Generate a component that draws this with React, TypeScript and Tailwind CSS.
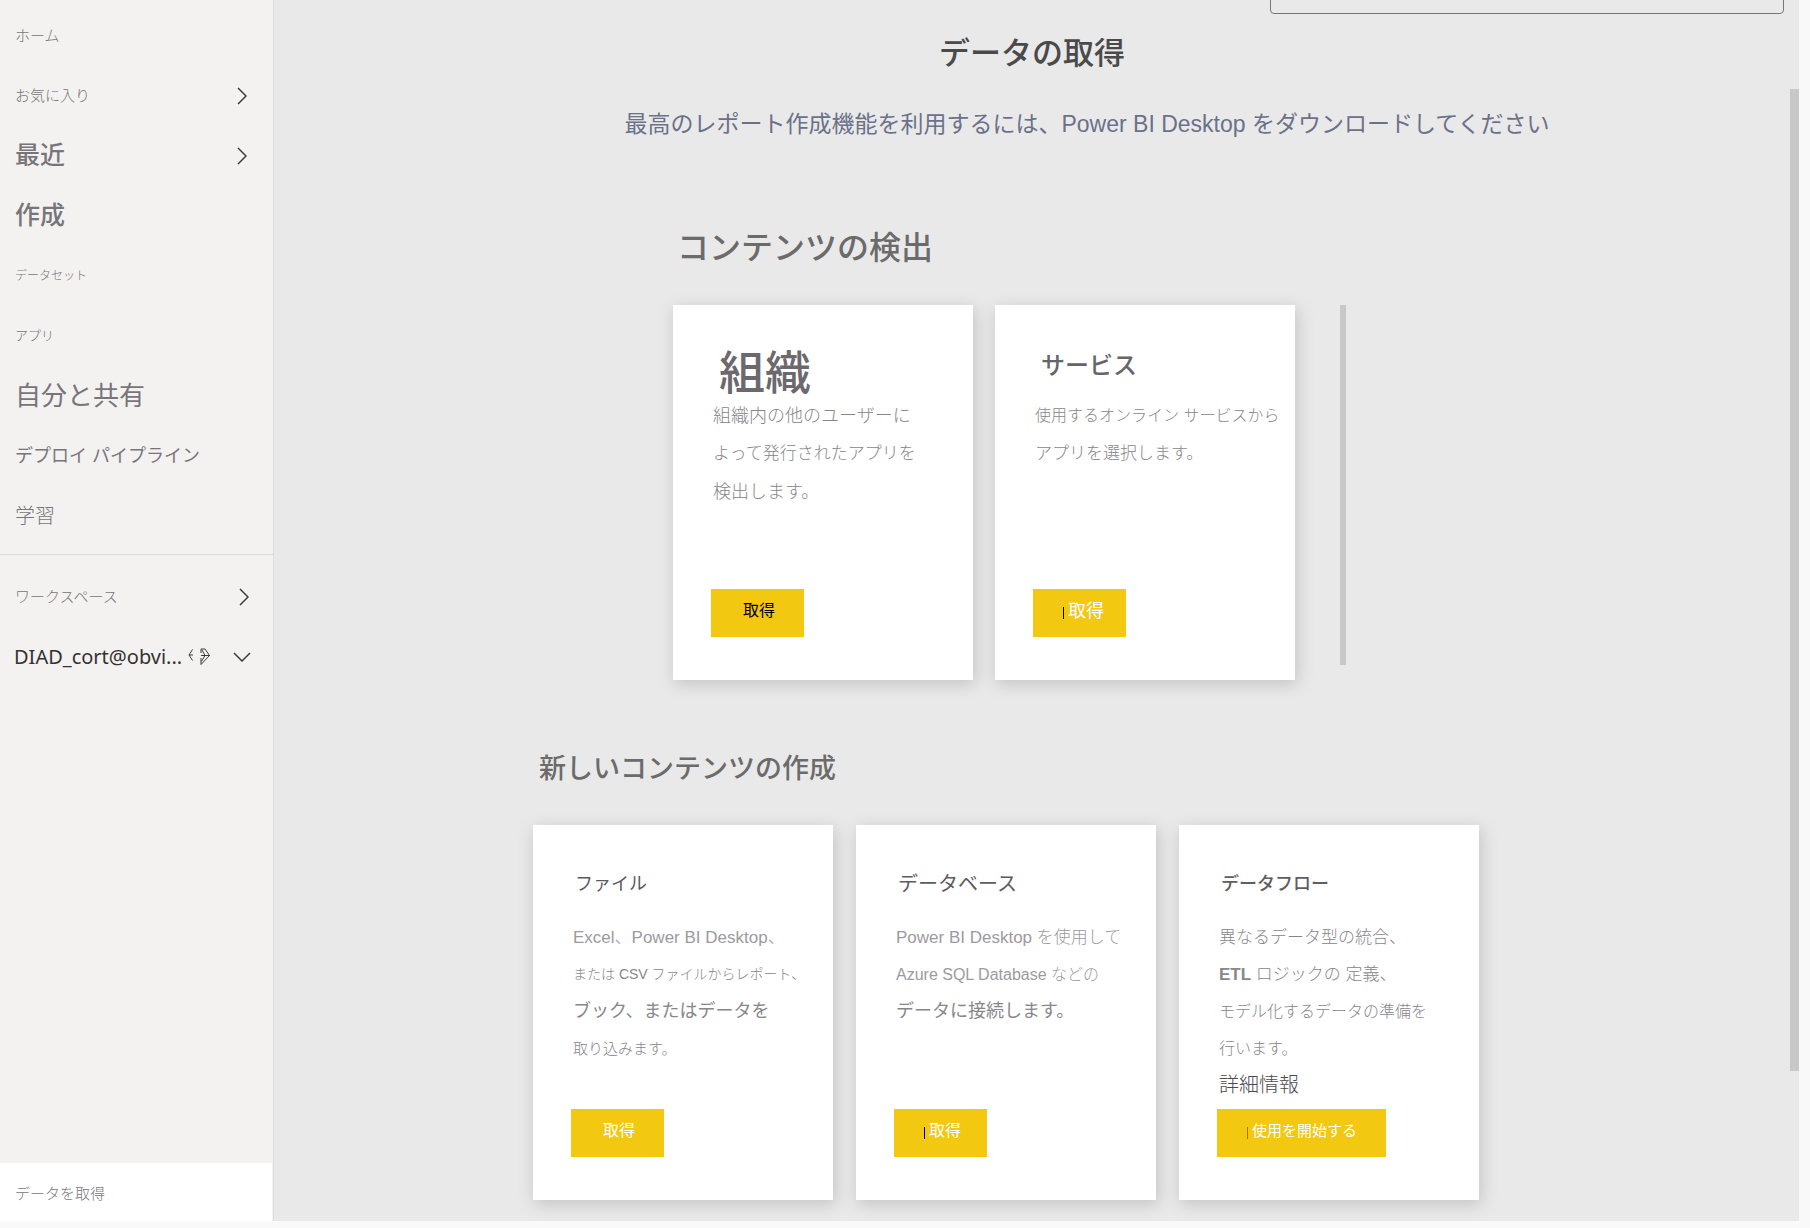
import React from 'react';

type Line = { text: React.ReactNode; className: string };

type CardProps = {
  title: string;
  titleClass: string;
  lines: Line[];
  leading: string;
  action: string;
  actionClass: string;
  caret?: string;
};

const navItems = [
  { label: "ホーム", className: "text-[15px] font-light" },
  { label: "お気に入り", className: "text-[15px] font-light", chevron: true },
  { label: "最近", className: "text-[25px] font-medium", chevron: true },
  { label: "作成", className: "text-[25px] font-medium" },
  { label: "データセット", className: "text-[12px] font-light" },
  { label: "アプリ", className: "text-[13px] font-light" },
  { label: "自分と共有", className: "text-[26px]" },
  { label: "デプロイ パイプライン", className: "text-[18px]" },
  { label: "学習", className: "text-[20px] font-light" }
];

const discoverCards: CardProps[] = [
  {
    title: "組織",
    titleClass: "h-[54px] pl-2 text-[46px] leading-[60px] font-medium text-[#6b696e]",
    leading: "leading-[38px]",
    lines: [
      { text: "組織内の他のユーザーに", className: "text-[18px] text-[#88868b]" },
      { text: "よって発行されたアプリを", className: "text-[17px] text-[#88868b]" },
      { text: "検出します。", className: "text-[18px] text-[#88868b]" }
    ],
    action: "取得",
    actionClass: "text-[16px] text-black"
  },
  {
    title: "サービス",
    titleClass: "h-[54px] pl-2 text-[24px] leading-[46px] font-medium text-[#67656c]",
    leading: "leading-[38px]",
    lines: [
      { text: "使用するオンライン サービスから", className: "text-[16px] text-[#88868b]" },
      { text: "アプリを選択します。", className: "text-[17px] text-[#88868b]" }
    ],
    action: "取得",
    actionClass: "text-[18px] text-white",
    caret: "bg-black"
  }
];

const createCards: CardProps[] = [
  {
    title: "ファイル",
    titleClass: "h-14 pl-1 text-[18px] leading-[43px] text-[#5a5860]",
    leading: "leading-[37px]",
    lines: [
      { text: "Excel、Power BI Desktop、", className: "text-[17px] text-[#9c9a9f]" },
      { text: "または CSV ファイルからレポート、", className: "text-[14px] text-[#88868b]" },
      { text: "ブック、またはデータを", className: "text-[18px] font-normal text-[#88868b]" },
      { text: "取り込みます。", className: "text-[15px] text-[#88868b]" }
    ],
    action: "取得",
    actionClass: "text-[16px] text-white"
  },
  {
    title: "データベース",
    titleClass: "h-14 pl-1 text-[20px] leading-[43px] text-[#5c5b5f]",
    leading: "leading-[37px]",
    lines: [
      { text: "Power BI Desktop を使用して", className: "text-[17px] text-[#9c9a9f]" },
      { text: "Azure SQL Database などの", className: "text-[16px] text-[#9c9a9f]" },
      { text: "データに接続します。", className: "text-[18px] font-normal text-[#88868b]" }
    ],
    action: "取得",
    actionClass: "text-[16px] text-white",
    caret: "bg-black"
  },
  {
    title: "データフロー",
    titleClass: "h-14 pl-1 text-[18px] leading-[43px] font-medium text-[#5f5d64]",
    leading: "leading-[37px]",
    lines: [
      { text: "異なるデータ型の統合、", className: "text-[17px] text-[#88868b]" },
      { text: <><b className="font-bold">ETL</b> ロジックの 定義、</>, className: "text-[17px] text-[#88868b]" },
      { text: "モデル化するデータの準備を", className: "text-[16px] text-[#88868b]" },
      { text: "行います。", className: "text-[16px] text-[#88868b]" },
      { text: <a href="#">詳細情報</a>, className: "text-[20px] text-[#4c4a4f]" }
    ],
    action: "使用を開始する",
    actionClass: "text-[15px] text-white",
    caret: "bg-[#b86a00]"
  }
];

const ChevronRight = () => (
  <svg width="10" height="18" viewBox="0 0 10 18" fill="none" stroke="#3b3a39" strokeWidth="1.5">
    <path d="M1 1l8 8-8 8" />
  </svg>
);

const ChevronDown = () => (
  <svg width="18" height="10" viewBox="0 0 18 10" fill="none" stroke="#3b3a39" strokeWidth="1.5">
    <path d="M1 1l8 8 8-8" />
  </svg>
);

const CapacityIcon = () => (
  <svg width="22" height="18" viewBox="0 0 22 18" fill="none" stroke="#3b3a39">
    <path d="M4.5 1.500L1 7l3.500 5.500M1 7h4" />
    <path d="M13 5V1h4l4.500 6.500L13 16.500V10M13 7.500h8.500M14 2l3 5.500-3.500 6" />
  </svg>
);

const Card = ({ title, titleClass, lines, leading, action, actionClass, caret }: CardProps) => (
  <article className="flex min-h-[375px] w-[300px] flex-col bg-white pt-[38px] pb-[43px] pl-[38px] shadow-[2px_4px_16px_rgba(0,0,0,0.17)]">
    <h3 className={titleClass}>{title}</h3>
    <div className="pl-0.5">
      {lines.map((line, index) => (
        <p key={index} className={`font-light whitespace-nowrap ${line.className} ${leading}`}>
          {line.text}
        </p>
      ))}
    </div>
    <button className={`mt-auto flex h-12 min-w-[93px] items-center gap-1 self-start bg-[#f2c811] pb-1 ${caret ? "pr-5 pl-[30px]" : "pr-5 pl-8"} ${action === "取得" ? "" : "w-[169px]"} ${actionClass}`}>
      {caret && <span className={`mt-1 h-3 w-px ${caret}`}></span>}
      {action}
    </button>
  </article>
);

const App = () => {
  return (
    <div className="flex min-h-screen bg-[#f9f9f9] pr-[11px] pb-[7px] font-['Liberation_Sans','Noto_Sans_CJK_JP',sans-serif]" lang="ja">
      {/* Sidebar */}
      <aside className="flex w-[274px] shrink-0 flex-col border-r border-[#dcdcdc] bg-[#f3f2f1] text-[#77757a]">
        <nav className="pt-1.5">
          {navItems.map((item) => (
            <a key={item.label} href="#" className={`flex h-15 items-center justify-between pr-[26px] pl-[15px] ${item.className}`}>
              {item.label}
              {item.chevron && <ChevronRight />}
            </a>
          ))}
        </nav>
        <div className="mt-2 border-t border-[#dddcdb] pt-3">
          <a href="#" className="flex h-15 items-center justify-between pr-6 pl-[15px] text-[15px] font-light">
            ワークスペース
            <ChevronRight />
          </a>
          <a href="#" className="flex h-15 items-center pr-[22px] pl-[14px] font-['Noto_Sans'] text-[20px] text-[#333]">
            DIAD_cort@obvi...
            <span className="ml-1.5"><CapacityIcon /></span>
            <span className="ml-auto"><ChevronDown /></span>
          </a>
        </div>
        <a href="#" className="mt-auto mr-px flex h-[58px] items-center bg-white pt-1 pl-[15px] text-[15px] font-light">
          データを取得
        </a>
      </aside>

      <main className="min-w-0 flex-1 overflow-hidden bg-[#e9e9e9] pb-5">
        <div className="-mt-[18px] flex justify-end pr-1.5">
          <input type="text" aria-label="検索" className="h-8 w-[514px] rounded-sm border border-[#777]" />
        </div>

        <h1 className="mt-5 text-center text-[31px] leading-[40px] font-medium text-[#4a4a4a]">データの取得</h1>
        <p className="mt-[30px] pl-[110px] text-center text-[23px] leading-[40px] whitespace-nowrap text-[#6b7189]">
          最高のレポート作成機能を利用するには、Power BI Desktop をダウンロードしてください
        </p>

        <div className="mx-auto w-[998px]">
          {/* Discover content */}
          <section className="pt-20 pl-[140px]">
            <h2 className="pl-1 text-[32px] leading-[48px] font-medium text-[#6b6b6b]">コンテンツの検出</h2>
            <div className="mt-[33px] flex gap-[22px]">
              {discoverCards.map((card) => (
                <Card key={card.title} {...card} />
              ))}
              <div className="ml-[23px] h-[360px] w-1.5 bg-[#c8c8c8]"></div>
            </div>
          </section>

          {/* Create new content */}
          <section className="pt-[65px]">
            <h2 className="pl-1.5 text-[27px] leading-[48px] font-medium text-[#6b6b6b]">新しいコンテンツの作成</h2>
            <div className="mt-8 flex gap-[23px]">
              {createCards.map((card) => (
                <Card key={card.title} {...card} />
              ))}
            </div>
          </section>
        </div>
      </main>

      <div className="w-[9px] shrink-0 bg-[#e9e9e9] pt-[89px]">
        <div className="h-[982px] bg-[#c8c8c8]"></div>
      </div>
    </div>
  );
};

export default App;
